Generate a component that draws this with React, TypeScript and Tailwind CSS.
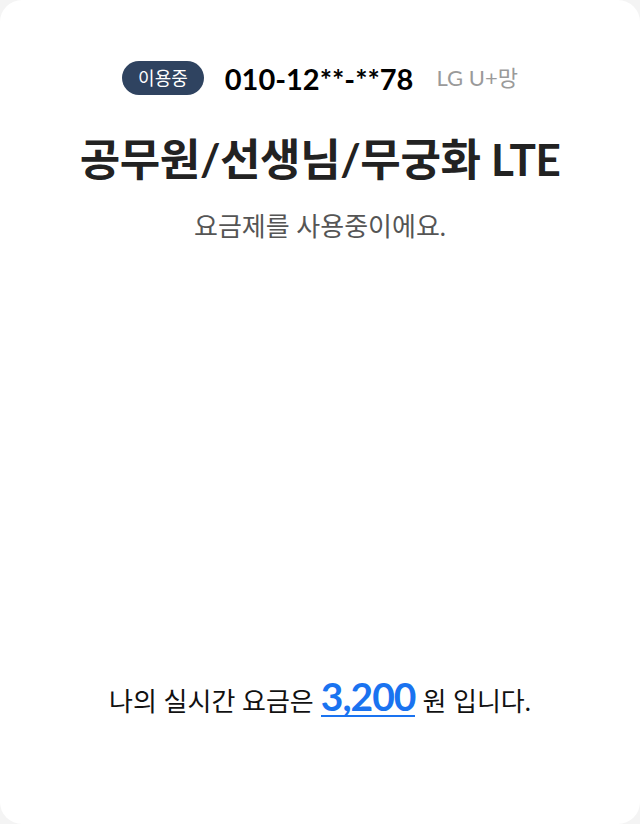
export default function App() {
  return (
    <div className="w-[640px] h-[824px] bg-[#f4f4f4]" style={{ fontFamily: 'Lato, "Noto Sans CJK KR", sans-serif' }}>
      <div className="w-full h-full bg-white rounded-[22px] flex flex-col items-center">
        <div className="mt-[61px] flex items-center">
          <span className="h-[34px] px-[16px] rounded-full bg-[#2f4360] text-white text-[18px] flex items-center">이용중</span>
          <span className="ml-[21px] text-[29px] font-bold text-black leading-none">010-12**-**78</span>
          <span className="ml-[23px] text-[22px] text-[#9a9a9a] leading-none">LG U+망</span>
        </div>
        <h1 className="mt-[36px] text-[44px] font-bold text-[#222] leading-[56px] tracking-[-0.4px]">공무원/선생님/무궁화 LTE</h1>
        <p className="mt-[22px] text-[26px] text-[#555] leading-[34px]">요금제를 사용중이에요.</p>
        <div className="flex-1" />
        <p className="mb-[103px] text-[26px] text-[#111] leading-[40px] flex items-baseline">
          나의 실시간 요금은
          <span className="mx-[7px] text-[39px] font-bold text-[#1a73f0] border-b-2 border-[#1a73f0] leading-[38px] tracking-[-1px]">3,200</span>
          원 입니다.
        </p>
      </div>
    </div>
  );
}
